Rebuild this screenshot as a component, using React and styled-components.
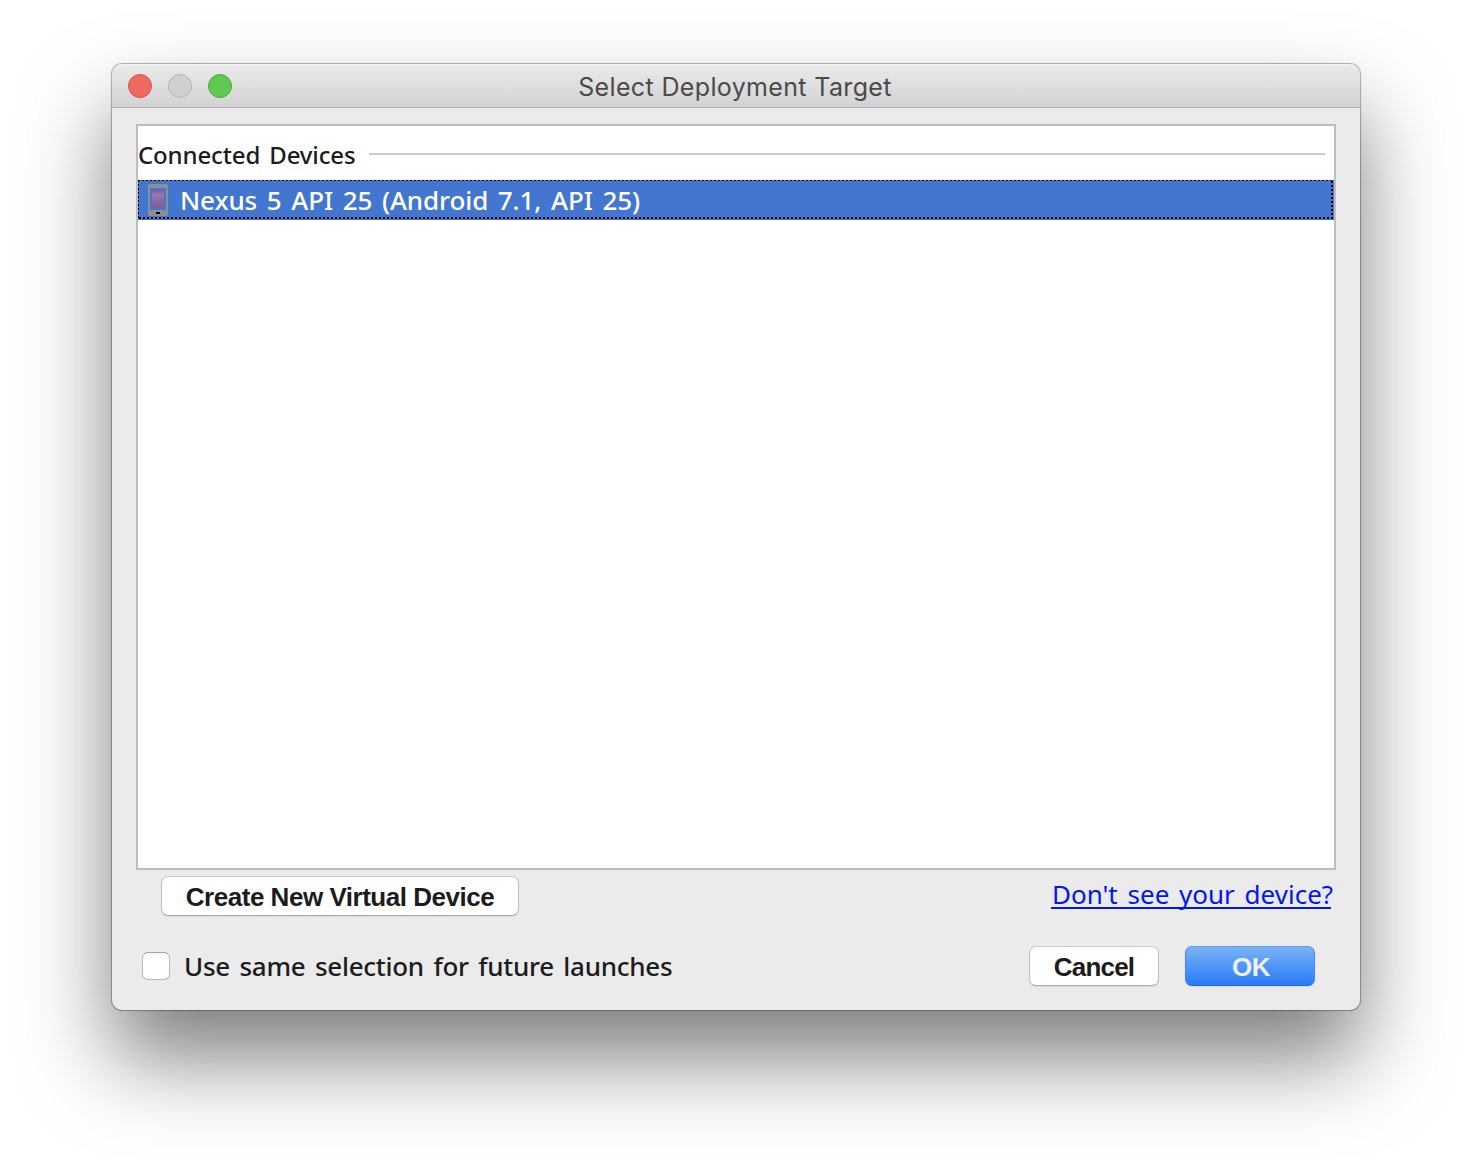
import React from "react";
import styled, { createGlobalStyle } from "styled-components";

const GlobalStyle = createGlobalStyle`
  * { box-sizing: border-box; }
  html, body { margin: 0; background: #fff; overflow: hidden; }
`;

const Desktop = styled.main`
  width: 1472px;
  height: 1170px;
  padding: 64px 112px;
  overflow: hidden;
`;

const Window = styled.section`
  display: flex;
  flex-direction: column;
  height: 946px;
  border-radius: 10px;
  background: #ebebeb;
  box-shadow: 0 0 1px 1px rgba(0, 0, 0, 0.3), 0 48px 86px rgba(0, 0, 0, 0.51);
`;

const TitleBar = styled.header`
  display: grid;
  grid-template-columns: 1fr auto 1fr;
  align-items: center;
  height: 44px;
  padding: 0 16px;
  border-radius: 10px 10px 0 0;
  border-bottom: 1px solid #b1b1b1;
  background: linear-gradient(#f6f6f6 0, #e9e9e9 2px, #d3d3d3 100%);
`;

const Lights = styled.div`
  display: flex;
  gap: 16px;
`;

const Light = styled.span`
  width: 24px;
  height: 24px;
  border-radius: 50%;
  border: 1px solid ${(p) => p.$edge};
  background: ${(p) => p.$fill};
`;

const Title = styled.h1`
  margin: 2px 2px 0 0;
  font: 400 25px/30px Inter, sans-serif;
  letter-spacing: 0.35px;
  color: #4a4a4a;
  white-space: nowrap;
`;

const Label = styled.span`
  font: ${(p) => p.$weight || 400} ${(p) => p.$size || 26}px/32px "Noto Sans", "Open Sans", sans-serif;
  letter-spacing: ${(p) => p.$track || 0}px;
  word-spacing: 3px;
  color: ${(p) => p.$color || "#1c1c1c"};
  white-space: nowrap;
`;

const DeviceList = styled.div`
  height: 746px;
  margin: 16px 24px 0;
  padding-top: 10px;
  border: 2px solid #bebebe;
  background: #fff;
`;

const GroupHeader = styled.div`
  display: flex;
  align-items: center;
  height: 44px;
  padding: 0 9px 8px 0;
`;

const GroupLabel = styled(Label)`
  width: 231px;
  padding-top: 2px;
`;

const Rule = styled.i`
  flex: 1;
  height: 2px;
  background: #cbcbcb;
`;

const DeviceRow = styled.div`
  display: flex;
  align-items: center;
  gap: 12px;
  height: 40px;
  padding-left: 10px;
  background:
    repeating-linear-gradient(90deg, #000 0 2px, transparent 2px 4px) 0 0 / 100% 1px no-repeat,
    repeating-linear-gradient(90deg, transparent 0 1px, #000 1px 3px, transparent 3px 4px) 0 37px / 100% 2px no-repeat,
    repeating-linear-gradient(#000 0 2px, transparent 2px 4px) 0 0 / 1px 39px no-repeat,
    repeating-linear-gradient(transparent 0 1px, #000 1px 3px, transparent 3px 4px) 1193px 0 / 2px 39px no-repeat,
    #4276cf;
`;

const Actions = styled.div`
  display: flex;
  justify-content: space-between;
  height: 40px;
  margin-top: 6px;
  padding: 0 29px 0 49px;
`;

const Footer = styled.footer`
  display: flex;
  align-items: center;
  height: 40px;
  margin-top: 30px;
  padding: 0 45px 0 30px;
`;

const Button = styled.button`
  width: ${(p) => p.$width}px;
  height: 40px;
  padding: 1px 0 0 ${(p) => (p.$primary ? 2 : 0)}px;
  border: 1px solid;
  border-color: ${(p) => (p.$primary ? "#5b9cf0 #3c87f2 #1b66ee" : "#cbcbcb #c2c2c2 #acacac")};
  border-radius: 7px;
  background: ${(p) => (p.$primary ? "linear-gradient(#79b2f4, #2a7cf9)" : "#fff")};
  box-shadow: 0 1px 1px rgba(0, 0, 0, 0.08);
  font: 700 26px/36px "Liberation Sans", Arial, sans-serif;
  letter-spacing: ${(p) => p.$track}px;
  color: ${(p) => (p.$primary ? "#efefef" : "#1c1c1c")};
  white-space: nowrap;
`;

const HelpLink = styled(Label).attrs({ as: "a" })`
  width: 280px;
  height: 33px;
  text-indent: 1px;
  border-bottom: 2px solid #0016f5;
  line-height: 37px;
`;

const Checkbox = styled.span`
  width: 28px;
  height: 28px;
  margin-right: 14px;
  border: 1px solid #b6b6b6;
  border-top-color: #a2a2a2;
  border-radius: 6px;
  background: linear-gradient(#f3f3f3, #fff 5px);
`;

const Option = styled.label`
  display: flex;
  align-items: center;
  flex: 1;
`;

const Buttons = styled.div`
  display: flex;
  gap: 26px;
`;

function PhoneIcon() {
  return (
    <svg width="20" height="32" viewBox="0 0 20 32" shapeRendering="crispEdges">
      <defs>
        <linearGradient id="screen" x1="0" y1="0" x2="0" y2="1">
          <stop offset="0" stopColor="#7c5a99" />
          <stop offset="0.25" stopColor="#9a76ae" />
          <stop offset="1" stopColor="#7d5b98" />
        </linearGradient>
      </defs>
      <path fill="#8f8f8f" fillRule="evenodd" d="M1 0H19V1H20V31H19V32H1V31H0V1H1ZM2 4V26H18V4Z" />
      <rect x="4" y="6" width="12" height="18" fill="url(#screen)" />
      <rect x="8" y="28" width="4" height="2" fill="#000" />
    </svg>
  );
}

export default function App() {
  return (
    <>
      <GlobalStyle />
      <Desktop>
        <Window>
          <TitleBar>
            <Lights>
              <Light $fill="#ef6a5e" $edge="#d9544a" />
              <Light $fill="#d0d0d0" $edge="#b4b4b4" />
              <Light $fill="#61c854" $edge="#4caa3c" />
            </Lights>
            <Title>Select Deployment Target</Title>
          </TitleBar>
          <DeviceList>
            <GroupHeader>
              <GroupLabel $size={24} $weight={500} $track={-0.14}>Connected Devices</GroupLabel>
              <Rule />
            </GroupHeader>
            <DeviceRow>
              <PhoneIcon />
              <Label $color="#fff" $weight={550} $track={-0.1}>Nexus 5 API 25 (Android 7.1, API 25)</Label>
            </DeviceRow>
          </DeviceList>
          <Actions>
            <Button $width={358} $track={-0.48}>Create New Virtual Device</Button>
            <HelpLink $color="#0016f5">Don't see your device?</HelpLink>
          </Actions>
          <Footer>
            <Option>
              <Checkbox />
              <Label $weight={500} $track={-0.27}>Use same selection for future launches</Label>
            </Option>
            <Buttons>
              <Button $width={130} $track={-0.8}>Cancel</Button>
              <Button $width={130} $track={-0.4} $primary>OK</Button>
            </Buttons>
          </Footer>
        </Window>
      </Desktop>
    </>
  );
}
